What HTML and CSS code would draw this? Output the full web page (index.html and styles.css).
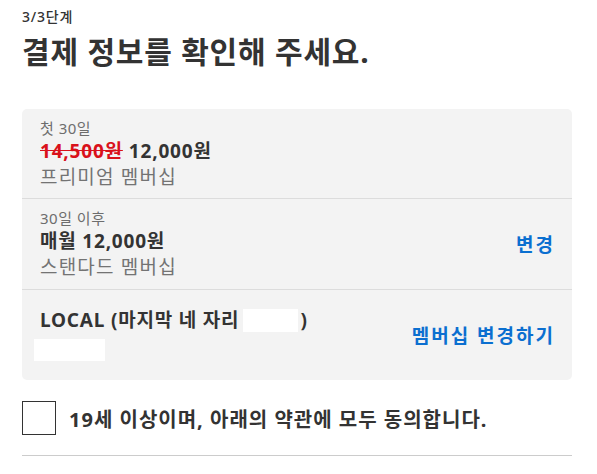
FILE: index.html
```html
<!DOCTYPE html>
<html lang="ko">
<head>
<meta charset="utf-8">
<link rel="stylesheet" href="styles.css">
</head>
<body>
<div class="page">
  <div class="step">3/3단계</div>
  <h1 class="title">결제 정보를 확인해 주세요.</h1>
  <div class="card">
    <div class="row">
      <div class="info">
        <div class="small">첫 30일</div>
        <div class="main"><span class="old">14,500원</span> 12,000원</div>
        <div class="sub">프리미엄 멤버십</div>
      </div>
    </div>
    <div class="row">
      <div class="info">
        <div class="small">30일 이후</div>
        <div class="main">매월 12,000원</div>
        <div class="sub">스탠다드 멤버십</div>
      </div>
      <a class="link">변경</a>
    </div>
    <div class="row row-pay">
      <div class="info">
        <div class="main">LOCAL (마지막 네 자리<span class="mask"></span>)</div>
        <div class="mask2"></div>
      </div>
      <a class="link">멤버십 변경하기</a>
    </div>
  </div>
  <label class="agree">
    <span class="box"></span>
    <span class="agree-text">19세 이상이며, 아래의 약관에 모두 동의합니다.</span>
  </label>
  <div class="rule"></div>
</div>
</body>
</html>
```

FILE: styles.css
```css
* { box-sizing: border-box; }
html, body { margin: 0; padding: 0; background: #fff; }
body {
  font-family: "Noto Sans", "Noto Sans CJK KR", sans-serif;
  color: #333;
}
.page {
  width: 550px;
  margin-left: 22px;
  padding-top: 6px;
}
.step {
  font-size: 14px;
  line-height: 22px;
  font-weight: 500;
  letter-spacing: 0.8px;
  color: #333;
}
.title {
  margin: 4px 0 0;
  font-size: 30px;
  line-height: 40px;
  font-weight: 700;
  letter-spacing: 0.8px;
  color: #333;
}
.card {
  margin-top: 37px;
  background: #f3f3f3;
  border-radius: 5px;
}
.row {
  display: flex;
  align-items: center;
  justify-content: space-between;
  padding: 9px 19px 9px 18px;
  height: 91px;
  border-bottom: 1px solid #dcdcdc;
}
.row:first-child { height: 90px; }
.row-pay { border-bottom: none; height: 90px; align-items: flex-start; padding-top: 17px; }
.row-pay .link { margin-top: 14px; }
.small {
  font-size: 15px;
  line-height: 20px;
  letter-spacing: 0.5px;
  color: #6d6d6d;
}
.main {
  font-size: 19px;
  line-height: 26px;
  font-weight: 700;
  letter-spacing: 0.8px;
  color: #333;
  display: flex;
  align-items: center;
}
.old {
  color: #d9111b;
  text-decoration: line-through;
  margin-right: 6px;
}
.sub {
  font-size: 19px;
  line-height: 26px;
  letter-spacing: 1.2px;
  color: #737373;
}
.mask {
  display: inline-block;
  width: 55px;
  height: 23px;
  background: #fff;
  margin-left: 4px;
  margin-right: 2px;
}
.mask2 {
  width: 71px;
  height: 22px;
  background: #fff;
  margin: 6px 0 0 -6px;
}
.link {
  font-size: 19px;
  font-weight: 700;
  letter-spacing: 2px;
  margin-right: -2px;
  color: #0b6fd0;
  cursor: pointer;
}
.agree {
  display: flex;
  align-items: center;
  margin-top: 21px;
}
.box {
  width: 34px;
  height: 34px;
  border: 1px solid #333;
  background: #fff;
  flex: none;
}
.agree-text {
  margin-left: 13px;
  font-size: 20px;
  font-weight: 700;
  letter-spacing: 1px;
  color: #333;
}
.rule {
  margin-top: 20px;
  height: 1px;
  background: #ccc;
}
```
